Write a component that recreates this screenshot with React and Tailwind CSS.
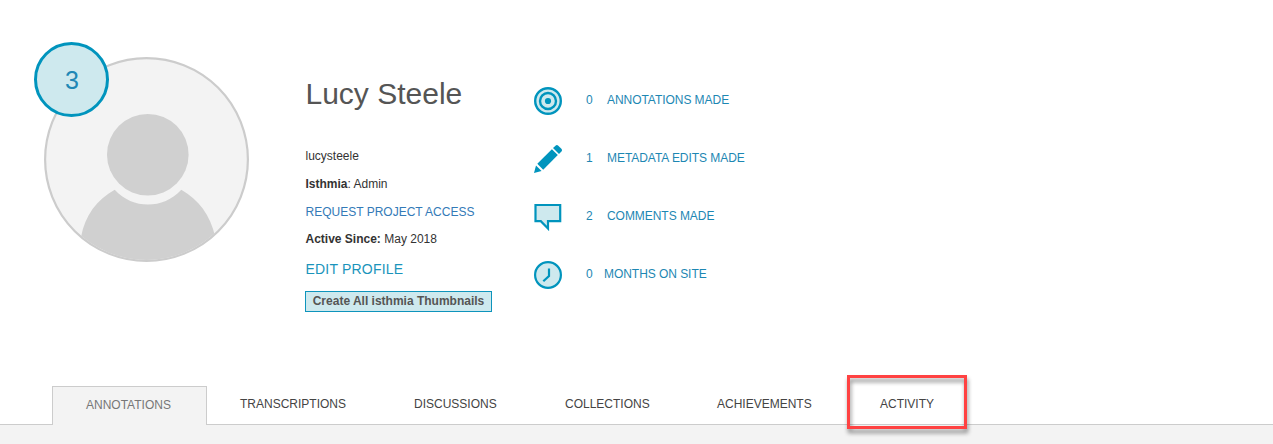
const stats = [
  { count: 0, label: 'ANNOTATIONS MADE', icon: TargetIcon, gap: 'w-[21px]' },
  { count: 1, label: 'METADATA EDITS MADE', icon: PencilIcon, gap: 'w-[21px]' },
  { count: 2, label: 'COMMENTS MADE', icon: CommentIcon, gap: 'w-[21px]' },
  { count: 0, label: 'MONTHS ON SITE', icon: ClockIcon, gap: 'w-[18px]' },
];

const tabs = [
  { label: 'TRANSCRIPTIONS', width: 'w-[174px]' },
  { label: 'DISCUSSIONS', width: 'w-[151px]' },
  { label: 'COLLECTIONS', width: 'w-[152px]' },
  { label: 'ACHIEVEMENTS', width: 'w-[163px]' },
];

function TargetIcon() {
  return (
    <svg className="size-7" viewBox="0 0 28 28" fill="#cee9ee" stroke="#0094bd">
      <circle cx="14" cy="14" r="12.8" strokeWidth="2.4" />
      <circle cx="14" cy="14" r="8" strokeWidth="2.4" />
      <circle cx="14" cy="14" r="3.1" fill="#0094bd" stroke="none" />
    </svg>
  );
}

function PencilIcon() {
  return (
    <svg className="size-7" viewBox="0 0 28 28" fill="#0094bd">
      <path d="M19 3 21.500 .7Q22.900-.5 24.300.7L27.400 3.800Q28.600 5.200 27.400 6.500L25 9Z" />
      <path d="M17.900 4.200 23.800 10.100 9.200 24.700 3.300 18.800Z" />
      <path d="M2 20.500 7.600 26.100 0 28Z" />
    </svg>
  );
}

function CommentIcon() {
  return (
    <svg className="size-7" viewBox="0 0 28 28" fill="#cee9ee" stroke="#0094bd" strokeWidth="2.2">
      <path d="M1.500 2H26.200V18.200H14V25.500L6.800 18.200H1.500Z" />
    </svg>
  );
}

function ClockIcon() {
  return (
    <svg className="size-7" viewBox="0 0 28 28" fill="#cee9ee" stroke="#0094bd" strokeWidth="2.2">
      <circle cx="14" cy="14" r="12.900" />
      <path d="M15 7.500V15L9.300 20.300" fill="none" />
    </svg>
  );
}

function Avatar() {
  return (
    <div className="relative mt-[57px] ml-[44px] size-[205px] shrink-0">
      <svg className="size-full" viewBox="0 0 205 205">
        <defs>
          <clipPath id="face">
            <circle cx="102.5" cy="102.5" r="100.5" />
          </clipPath>
        </defs>
        <circle cx="102.5" cy="102.5" r="101.4" fill="#f3f3f3" stroke="#cccccc" strokeWidth="2.2" />
        <g clipPath="url(#face)" fill="#d0d0d0">
          <circle cx="103.8" cy="97.700" r="40.800" />
          <path d="M32 205L37 180C41.200 158 53 142.500 70.700 132.700C89 152.500 119 152.500 137.300 132.700C154.500 142.500 166.500 158 171.200 180L175 205Z" />
        </g>
      </svg>
      <div className="absolute -top-[15px] -left-[10px] flex size-[75px] items-center justify-center rounded-full border-3 border-[#0094bd] bg-[#cee9ee] pt-[2px] pl-px text-[25px] text-[#2087b5]">
        3
      </div>
    </div>
  );
}

export default function App() {
  return (
    <div className="flex h-[444px] w-[1273px] flex-col overflow-hidden bg-white font-['Liberation_Sans',Arial,sans-serif] text-xs text-[#333]">
      <header className="flex h-[386px] shrink-0">
        <Avatar />
        <section className="ml-[56px] w-[229px] shrink-0 pt-[74px]">
          <h1 className="h-[68px] pl-[0.5px] text-[30px] leading-[40px] text-[#555]">Lucy Steele</h1>
          <p className="pl-[0.5px] leading-7">lucysteele</p>
          <p className="pl-[0.5px] leading-7"><b>Isthmia</b>: Admin</p>
          <a className="block pl-[0.5px] leading-[28px] text-[#337ab7]">REQUEST PROJECT ACCESS</a>
          <p className="-mt-px pl-[0.5px] leading-7"><b>Active Since:</b> May 2018</p>
          <a className="block h-[38px] pl-[0.5px] text-sm leading-8 tracking-[0.2px] text-[#1a94bb]">EDIT PROFILE</a>
          <button className="block h-[21px] w-[187px] border border-[#0e94bc] bg-[#cee9ee] text-center leading-[19px] font-bold whitespace-nowrap text-[#555]">
            Create All isthmia Thumbnails
          </button>
        </section>
        <section className="flex flex-col gap-[30px] pt-[87px]">
          {stats.map(({ count, label, icon: Icon, gap }) => (
            <div key={label} className="flex h-7 items-center text-[#1d87b3]">
              <Icon />
              <span className={`${gap} ml-[24px] -mt-[3px]`}>{count}</span>
              <span className="-mt-[3px] tracking-[-0.05px]">{label}</span>
            </div>
          ))}
        </section>
      </header>
      <nav className="flex h-[39px] shrink-0 text-[#444]">
        <div className="w-[52px] border-b border-[#ccc]" />
        <div className="w-[155px] border border-b-0 border-[#ccc] bg-[#f3f3f3] pl-[33px] leading-[36px] text-[#777]">ANNOTATIONS</div>
        <div className="flex flex-1 border-b border-[#ccc] pl-[33px]">
          {tabs.map(({ label, width }) => (
            <div key={label} className={`${width} leading-[36px]`}>{label}</div>
          ))}
          <div className="relative leading-[36px]">
            ACTIVITY
            <div className="absolute -top-[11px] -left-[33px] h-[54px] w-[120px] border-3 border-[#ff4242] drop-shadow-[1px_4px_2px_rgba(0,0,0,0.45)]" />
          </div>
        </div>
      </nav>
      <div className="flex-1 bg-[#f3f3f3]" />
    </div>
  );
}
